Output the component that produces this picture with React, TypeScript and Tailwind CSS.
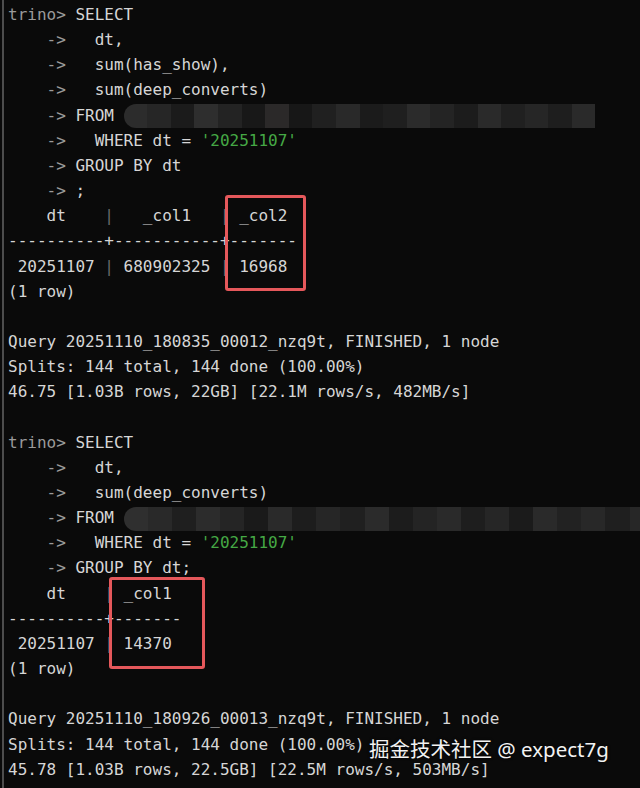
import React from "react";

const BLUR_A = ["#2c2c2c", "#262626", "#1b1b1b", "#2e2e2e", "#232323", "#181818", "#2b2929", "#171717", "#202020", "#292929", "#1b1b1b", "#1f1f1f", "#2b2b2b", "#242424", "#1c1c1c", "#2a2a2a", "#202020", "#262626", "#1e1e1e", "#2a2a2a"];
const BLUR_B = ["#2f2f2f", "#292929", "#1f1f1f", "#2c2c2c", "#252525", "#1a1a1a", "#2a2a2a", "#1d1d1d", "#262626", "#202020", "#2b2b2b", "#1c1c1c", "#242424", "#2a2a2a", "#1e1e1e", "#262626", "#1b1b1b", "#2a2a2a", "#222222", "#282828", "#1f1f1f", "#272727"];

const Mosaic: React.FC<{ blocks: string[]; width: string }> = ({ blocks, width }) => (
  <span className={`inline-flex h-[24px] align-middle overflow-hidden rounded-l-full blur-[0.6px] ${width}`}>
    {blocks.map((c, i) => (
      <span key={i} className="h-full flex-1" style={{ backgroundColor: c }} />
    ))}
  </span>
);

const Prompt = () => <span className="text-[#9a9a9a]">trino&gt; </span>;
const Arrow = () => <span className="text-[#9a9a9a]">    -&gt; </span>;
const Pipe = () => <span className="text-[#6a6a6a]">|</span>;
const Str = ({ v }: { v: string }) => <span className="text-[#45a845]">{v}</span>;

const Line: React.FC<{ children?: React.ReactNode }> = ({ children }) => (
  <div className="h-[25.17px] whitespace-pre">{children ?? " "}</div>
);

export default function App() {
  return (
    <div className="relative w-[640px] h-[788px] overflow-hidden bg-[#0a0a0a]">
      <div className="absolute left-[2px] top-0 bottom-0 w-[2px] bg-[#4d4d4d]" />
      <div className="pl-[8px] pt-[2px] text-[16px] leading-[25.17px] text-[#d6d6d6] font-['DejaVu_Sans_Mono','Liberation_Mono',monospace]">
        <Line><Prompt />SELECT</Line>
        <Line><Arrow />  dt,</Line>
        <Line><Arrow />  sum(has_show),</Line>
        <Line><Arrow />  sum(deep_converts)</Line>
        <Line><Arrow />FROM <Mosaic blocks={BLUR_A} width="w-[472px]" /></Line>
        <Line><Arrow />  WHERE dt = <Str v="'20251107'" /></Line>
        <Line><Arrow />GROUP BY dt</Line>
        <Line><Arrow />;</Line>
        <Line>    dt    <Pipe />   _col1   <Pipe /> _col2 </Line>
        <Line>----------+-----------+-------</Line>
        <Line> 20251107 <Pipe /> 680902325 <Pipe /> 16968 </Line>
        <Line>(1 row)</Line>
        <Line />
        <Line>Query 20251110_180835_00012_nzq9t, FINISHED, 1 node</Line>
        <Line>Splits: 144 total, 144 done (100.00%)</Line>
        <Line>46.75 [1.03B rows, 22GB] [22.1M rows/s, 482MB/s]</Line>
        <Line />
        <Line><Prompt />SELECT</Line>
        <Line><Arrow />  dt,</Line>
        <Line><Arrow />  sum(deep_converts)</Line>
        <Line><Arrow />FROM <Mosaic blocks={BLUR_B} width="w-[530px]" /></Line>
        <Line><Arrow />  WHERE dt = <Str v="'20251107'" /></Line>
        <Line><Arrow />GROUP BY dt;</Line>
        <Line>    dt    <Pipe /> _col1 </Line>
        <Line>----------+-------</Line>
        <Line> 20251107 <Pipe /> 14370 </Line>
        <Line>(1 row)</Line>
        <Line />
        <Line>Query 20251110_180926_00013_nzq9t, FINISHED, 1 node</Line>
        <Line>Splits: 144 total, 144 done (100.00%)</Line>
        <Line>45.78 [1.03B rows, 22.5GB] [22.5M rows/s, 503MB/s]</Line>
      </div>

      {/* highlight boxes */}
      <div className="absolute left-[225px] top-[195px] w-[81px] h-[96px] border-[3px] border-[#e5585b] rounded-[3px]" />
      <div className="absolute left-[109px] top-[577px] w-[96px] h-[92px] border-[3px] border-[#e5585b] rounded-[3px]" />

      {/* watermark */}
      <div className="absolute left-[369px] top-[734px] text-[20.5px] leading-[30px] text-[#f2f2f2] font-['Noto_Sans','Noto_Sans_CJK_SC',sans-serif] [text-shadow:0_0_3px_rgba(0,0,0,0.8)] whitespace-nowrap">
        掘金技术社区 @ expect7g
      </div>
    </div>
  );
}
